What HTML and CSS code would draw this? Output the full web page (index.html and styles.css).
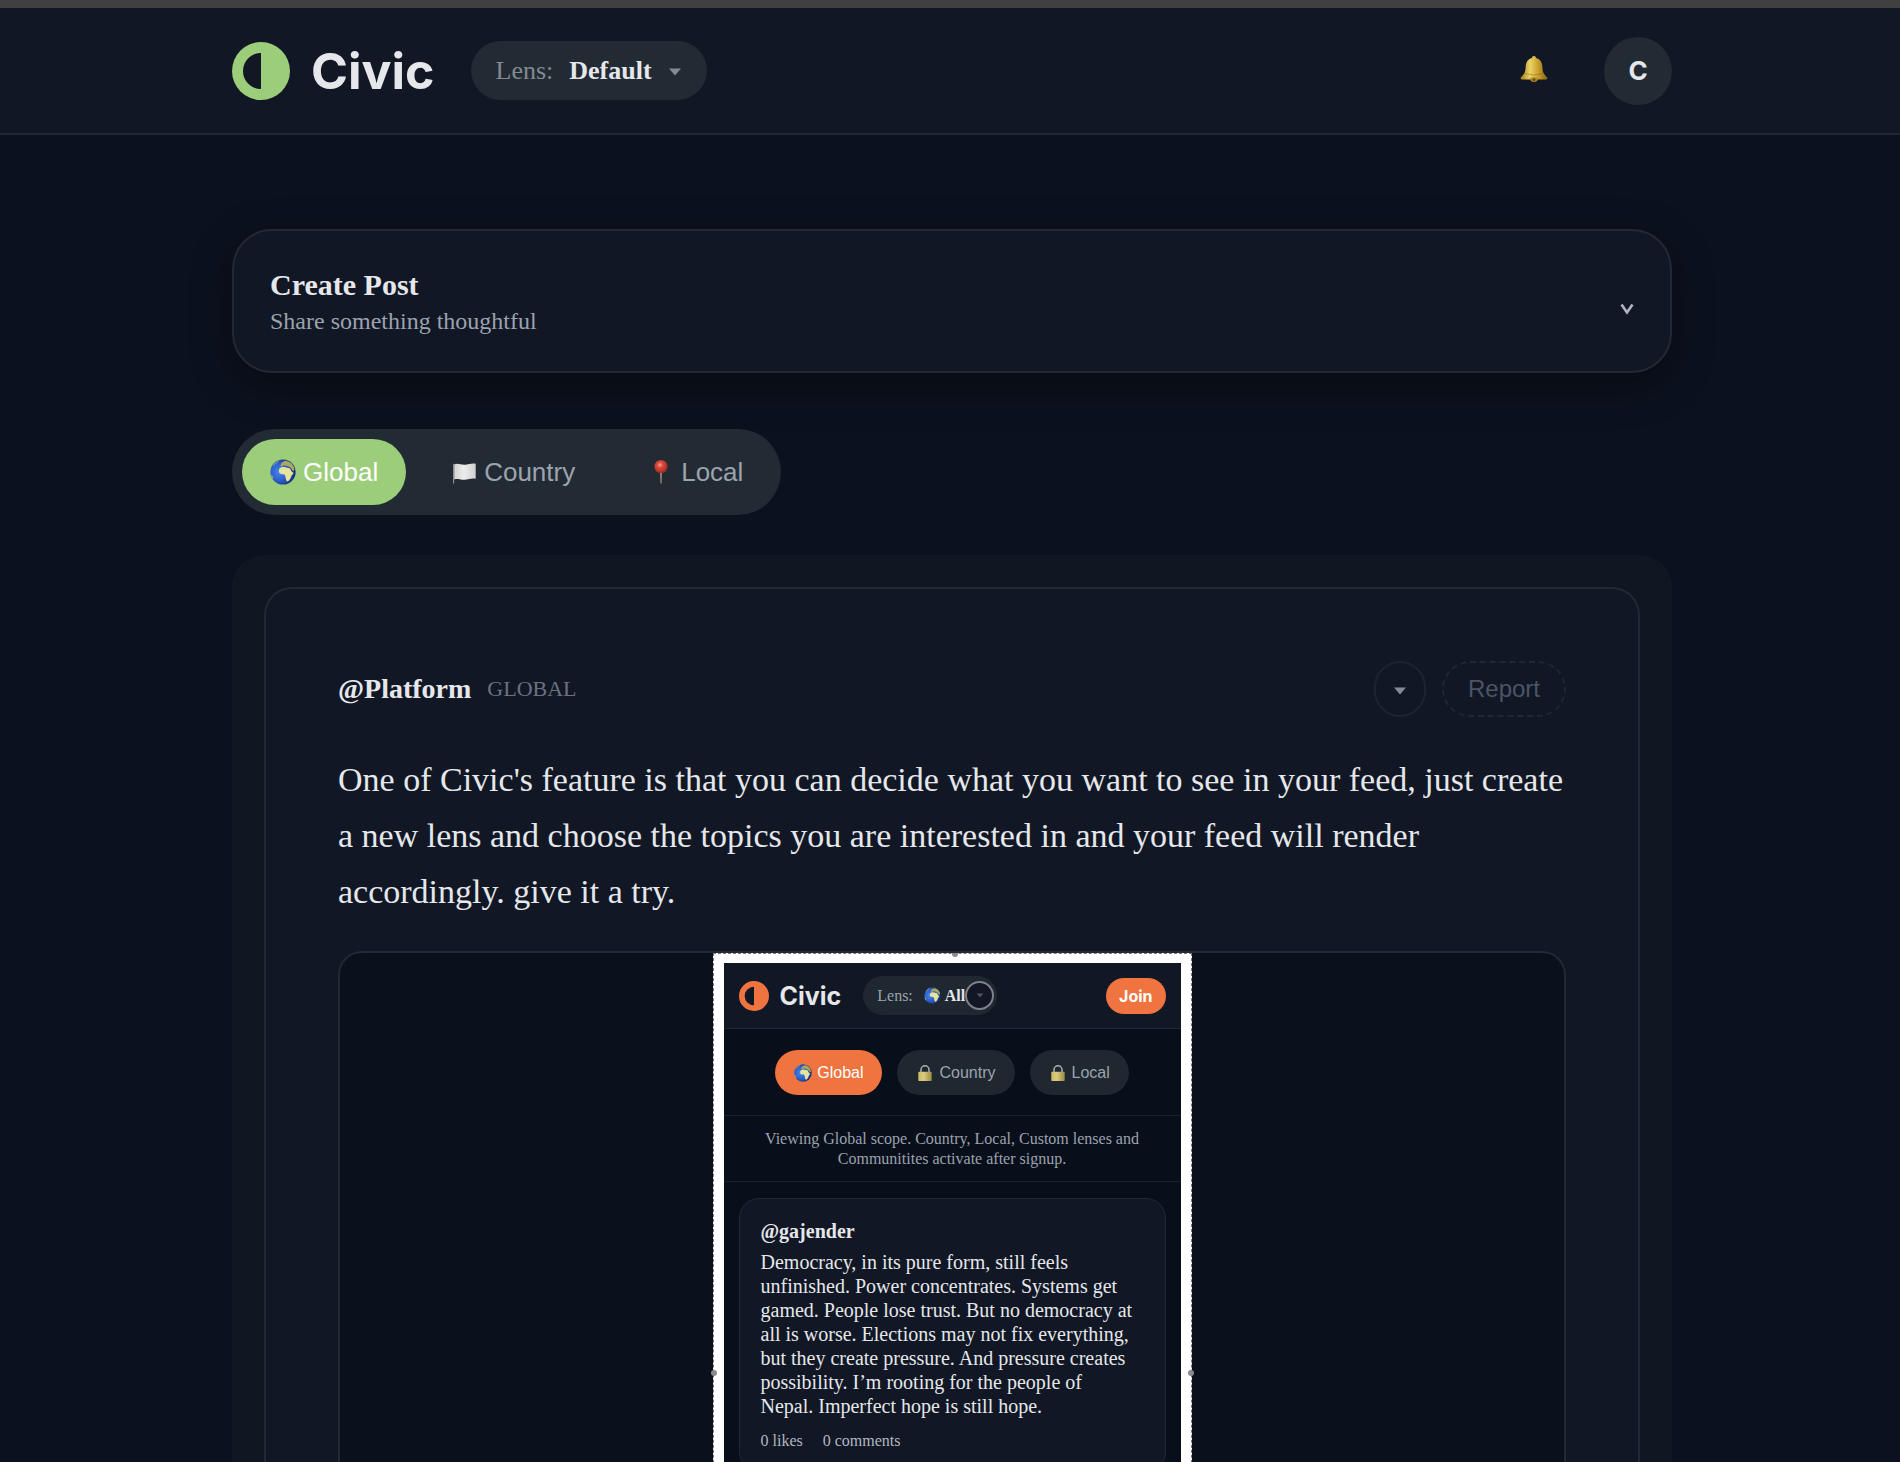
FILE: index.html
```html
<!DOCTYPE html>
<html lang="en">
<head>
<meta charset="utf-8">
<meta name="viewport" content="width=device-width, initial-scale=1">
<title>Civic</title>
<link rel="stylesheet" href="styles.css">
</head>
<body>
<svg class="sprite" aria-hidden="true">
  <defs>
    <radialGradient id="sea" cx="35%" cy="50%" r="65%"><stop offset="0" stop-color="#4a86ee"/><stop offset=".55" stop-color="#2a5cc8"/><stop offset="1" stop-color="#142a6c"/></radialGradient>
    <linearGradient id="gold" x1="0" x2="1" y1="0" y2="0"><stop offset="0" stop-color="#a8800f"/><stop offset=".35" stop-color="#ecd468"/><stop offset=".65" stop-color="#c9a12c"/><stop offset="1" stop-color="#8a6410"/></linearGradient>
    <radialGradient id="pinhead" cx="42%" cy="38%" r="60%"><stop offset="0" stop-color="#f7a79c"/><stop offset=".35" stop-color="#dd4a3e"/><stop offset="1" stop-color="#a82a22"/></radialGradient>
    <linearGradient id="brass" x1="0" x2="1" y1="0" y2="0"><stop offset="0" stop-color="#cdbb63"/><stop offset=".4" stop-color="#d9cc80"/><stop offset="1" stop-color="#9c8b40"/></linearGradient>
    <linearGradient id="cloth" x1="0" x2="1" y1="0" y2="0"><stop offset="0" stop-color="#d2d2d2"/><stop offset=".45" stop-color="#ececec"/><stop offset="1" stop-color="#cfcfcf"/></linearGradient>
  </defs>
  <symbol id="globe" viewBox="0 0 26 26">
    <circle cx="13" cy="13" r="12.6" fill="url(#sea)"/>
    <path d="M9.200 10.200c.6-1.300 1.900-2 3.400-2.200 1.800-.3 3.300.2 4.700.7 1.200.3 2 .2 2.700.9.8 1.400 1.300 2.700 2.300 3.700l1.200.2c-.3 1.500-1.500 2.500-2.300 3.800-.2 1.400-.8 2.400-1.500 3.300-.7 1.200-1.600 2.100-2.700 2-1.200-1.500-1.300-3.300-1.600-5-.2-1.400-.7-2.300-2.200-2.300-2 .2-3.800-.6-4.200-2.200-.2-1.100-.2-2 .2-2.900z" fill="#e6e39a"/>
    <path d="M10.500 7.200l.4-2.400 1.800-1.700 2.700-1.300c2.800.3 5.300 1.600 7.200 3.900 1.100 1.500 1.800 3.100 2.100 5l-1.700 1.200-2-2.600-1.300-1.400-2.200.1-1.600-1.300-2.400-.1-1.500 1z" fill="#a9a860"/>
    <path d="M14.800 7.200l2.200-.4 2.100.8-1.900.5z" fill="#2a5cc8"/>
    <path d="M3.200 5.800C4.800 3.600 7 2 9.600 1.200L8 3.400 5.200 5.200 3.600 8z" fill="#8fa58b" opacity=".7"/>
    <path d="M.8 15.500l1.900 1.300.8 2.600-.6 1.200a12 12 0 0 1-2.100-5.100z" fill="#93a67a"/>
  </symbol>
  <symbol id="bell" viewBox="0 0 28 28">
    <path d="M14 1c1.300 0 2 .8 2 1.900 3.900.9 6 4 6.300 8.200.2 3.900.6 6.500 2.200 8.500l2.700 3c.5.900-.3 1.700-1.800 2H2.600C1.100 24.300.3 23.500.8 22.600l2.700-3c1.600-2 2-4.600 2.200-8.500C6 6.900 8.100 3.800 12 2.900 12 1.800 12.700 1 14 1z" fill="url(#gold)"/>
    <path d="M4.500 18.500q9.500 3 19 0" fill="none" stroke="#8a6312" stroke-width=".8" opacity=".6"/>
    <path d="M10 23a4 4 0 0 0 8 0q-4-1.400-8 0z" fill="#b98a28"/>
    <circle cx="14" cy="24.800" r="1.500" fill="#6d4c10"/>
  </symbol>
  <symbol id="flag" viewBox="0 0 26 26">
    <path d="M2 5l1.200-.4v20H2z" fill="#8b8b8b"/>
    <path d="M3.200 5.400c3.500-1.600 7 .7 10.500.4 3.800-.2 7-1.900 11-1.100v15c-3.800-1-7.200.8-11 1.100-3.500.3-7-1.600-10.500-.2z" fill="url(#cloth)"/>
  </symbol>
  <symbol id="pin" viewBox="0 0 26 26">
    <path d="M12 12h2l-.4 12.500h-1.200z" fill="#9b8578"/>
    <circle cx="13" cy="7.500" r="6.600" fill="url(#pinhead)"/>
  </symbol>
  <symbol id="lock" viewBox="0 0 18 18">
    <path d="M5 8.500V5.800a4 4 0 0 1 8 0v2.700" fill="none" stroke="#a9b4b8" stroke-width="1.500"/>
    <rect x="2.300" y="7.800" width="13.400" height="9.200" rx=".8" fill="url(#brass)"/>
  </symbol>
  <symbol id="mark" viewBox="0 0 58 58">
    <circle cx="29" cy="29" r="29" fill="currentColor"/>
    <path d="M29 11v36a18 18 0 0 1 0-36z" fill="#111724"/>
  </symbol>
  <symbol id="caret" viewBox="0 0 14 8"><path d="M1 .5h12L7 7.500z" fill="currentColor"/></symbol>
</svg>

<div class="app">
  <header class="topbar">
    <div class="container topbar-row">
      <a class="brand" href="#"><svg class="brand-mark"><use href="#mark"/></svg><span>Civic</span></a>
      <button class="lens" type="button"><span class="lens-label">Lens:</span><strong>Default</strong><svg class="caret"><use href="#caret"/></svg></button>
      <button class="bell" type="button" aria-label="Notifications"><svg><use href="#bell"/></svg></button>
      <button class="avatar" type="button">C</button>
    </div>
  </header>

  <main class="container main">
    <section class="composer">
      <div>
        <h2>Create Post</h2>
        <p>Share something thoughtful</p>
      </div>
      <button class="expand" type="button" aria-label="Expand"><svg viewBox="0 0 14 12"><path d="M1.500 1.500L7 9.500l5.500-8" fill="none" stroke="currentColor" stroke-width="2.600"/></svg></button>
    </section>

    <nav class="scopes">
      <button class="scope active" type="button"><svg><use href="#globe"/></svg>Global</button>
      <button class="scope" type="button"><svg><use href="#flag"/></svg>Country</button>
      <button class="scope" type="button"><svg><use href="#pin"/></svg>Local</button>
    </nav>

    <section class="feed">
      <article class="post">
        <header class="post-head">
          <a class="author" href="#">@Platform</a>
          <span class="post-scope">GLOBAL</span>
          <button class="more" type="button" aria-label="More"><svg class="caret"><use href="#caret"/></svg></button>
          <button class="report" type="button">Report</button>
        </header>
        <p class="post-text">One of Civic's feature is that you can decide what you want to see in your feed, just create a new lens and choose the topics you are interested in and your feed will render accordingly. give it a try.</p>
        <div class="media">
          <div class="shot">
            <i class="handle handle-top"></i><i class="handle handle-left"></i><i class="handle handle-right"></i>
            <div class="mini">
              <div class="mini-bar">
                <a class="mini-brand" href="#"><svg><use href="#mark"/></svg><span>Civic</span></a>
                <button class="mini-lens" type="button"><span>Lens:</span><svg><use href="#globe"/></svg><strong>All</strong><span class="tap"><svg><use href="#caret"/></svg></span></button>
                <button class="join" type="button">Join</button>
              </div>
              <div class="mini-scopes">
                <button class="mini-scope active" type="button"><svg><use href="#globe"/></svg>Global</button>
                <button class="mini-scope" type="button"><svg><use href="#lock"/></svg>Country</button>
                <button class="mini-scope" type="button"><svg><use href="#lock"/></svg>Local</button>
              </div>
              <p class="notice">Viewing Global scope. Country, Local, Custom lenses and Communitites activate after signup.</p>
              <article class="mini-post">
                <h3>@gajender</h3>
                <p>Democracy, in its pure form, still feels unfinished. Power concentrates. Systems get gamed. People lose trust. But no democracy at all is worse. Elections may not fix everything, but they create pressure. And pressure creates possibility. I’m rooting for the people of Nepal. Imperfect hope is still hope.</p>
                <div class="stats"><span>0 likes</span><span>0 comments</span></div>
              </article>
            </div>
          </div>
        </div>
      </article>
    </section>
  </main>
</div>
</body>
</html>
```
FILE: styles.css
```css
* { box-sizing: border-box; }

body {
  margin: 0;
  background: #0b111e;
  color: #e5e7eb;
  font-family: "Liberation Serif", "Times New Roman", serif;
}

h2, h3, p { margin: 0; }
a { color: inherit; text-decoration: none; }
button { margin: 0; padding: 0; border: 0; background: none; color: inherit; font: inherit; cursor: pointer; }
svg { display: block; flex: none; }
.sprite { position: absolute; width: 0; height: 0; }

.app {
  height: 100vh;
  overflow-y: auto;
  scrollbar-width: none;
  border-top: 8px solid #404040;
}

.container { width: 100%; max-width: 1488px; margin: 0 auto; padding: 0 22px 0 26px; }

/* Top bar */
.topbar { background: #111724; border-bottom: 2px solid #222933; }
.topbar-row { display: flex; align-items: center; height: 125px; }
.brand { display: flex; align-items: center; gap: 21px; font: 700 50px/60px Inter, sans-serif; }
.brand-mark { width: 58px; height: 58px; color: #9ccd7a; }
.lens {
  display: flex; align-items: center; gap: 16px;
  height: 59px; margin-left: 36px; padding: 0 25px;
  border-radius: 30px; background: #222a33; font-size: 26px;
}
.lens-label { color: #838a93; }
.caret { width: 14px; height: 8px; margin-top: 3px; color: #838a93; }
.bell { margin-left: auto; margin-right: 56px; padding-bottom: 3px; }
.bell svg { width: 28px; height: 28px; }
.avatar {
  width: 68px; height: 68px; border-radius: 50%;
  background: #222a33; font: 700 26px/68px Inter, sans-serif;
}

/* Page column */
.main { padding-top: 94px; }
.composer {
  display: flex; align-items: center; justify-content: space-between;
  padding: 34px 36px; border: 2px solid #222933; border-radius: 40px;
  background: #111724; box-shadow: 0 12px 40px rgba(0, 0, 0, .35);
}
.composer h2 { font-size: 30px; line-height: 40px; }
.composer p { font-size: 24px; line-height: 32px; color: #9ca3af; }
.expand { margin-top: 16px; color: #b0b5be; }
.expand svg { width: 14px; height: 12px; }

.scopes {
  display: flex; gap: 17px; width: max-content;
  margin-top: 56px; padding: 10px;
  border-radius: 43px; background: #222a33;
}
.scope {
  display: flex; align-items: center; gap: 7px;
  height: 66px; padding: 0 28px; border-radius: 33px;
  color: #9ca3af; font: 26px/30px "Liberation Sans", Arial, sans-serif;
}
.scope svg { width: 26px; height: 26px; }
.scope.active { background: #9ccd7a; color: #fff; }

/* Feed */
.feed { margin-top: 40px; padding: 32px; border-radius: 32px; background: #101622; }
.post { padding: 72px; border: 2px solid #222933; border-radius: 28px; background: #111724; }
.post-head { display: flex; align-items: center; height: 56px; }
.author { font-size: 28px; font-weight: 700; }
.post-scope { margin-left: 16px; font-size: 22px; color: #6b7280; }
.more {
  display: grid; place-items: center;
  width: 52px; height: 56px; margin-left: auto;
  border: 2px solid #1d2430; border-radius: 26px;
}
.report {
  width: 124px; height: 56px; margin-left: 16px;
  border: 2px dashed #1f2733; border-radius: 28px;
  color: #4b5566; font: 24px/28px "Liberation Sans", Arial, sans-serif;
}
.post-text { margin: 35px -16px 0 0; font-size: 34px; line-height: 56px; }

.media {
  display: flex; justify-content: center;
  margin-top: 31px; border: 2px solid #222933; border-radius: 24px;
  background: #0a101c; overflow: hidden;
}
.shot {
  position: relative; width: 479px; padding: 9px 10px;
  border: 1px dashed #777; background: #fff;
}
.handle { position: absolute; width: 6px; height: 6px; border-radius: 50%; background: #8a8a8a; }
.handle-top { top: -3px; left: 50%; }
.handle-left { left: -3px; top: 416px; }
.handle-right { right: -3px; top: 416px; }

/* Embedded app preview */
.mini { background: #080e1a; font-size: 16px; }
.mini-bar {
  display: flex; align-items: center; height: 66px; padding: 0 15px;
  background: #111724; border-bottom: 1px solid #222933;
}
.mini-brand { display: flex; align-items: center; gap: 11px; font: 700 25px/30px Inter, sans-serif; }
.mini-brand svg { width: 30px; height: 30px; color: #ef7440; }
.mini-lens {
  display: flex; align-items: center; height: 39px;
  margin-left: 22px; padding: 0 3px 0 14px; border-radius: 20px;
  background: #1f2730; color: #9ca3af;
}
.mini-lens svg { width: 17px; height: 17px; margin: 0 4px 0 11px; }
.mini-lens strong { color: #e5e7eb; }
.mini-lens .tap {
  display: grid; place-items: center; width: 29px; height: 29px;
  border: 2px solid #7d828a; border-radius: 50%; background: #111724; color: #4b5563;
}
.mini-lens .tap svg { width: 8px; height: 5px; margin: 0; }
.join {
  height: 36px; margin-left: auto; padding: 0 13px; border-radius: 18px;
  background: #ef7440; color: #fff; font: 700 16px/20px Inter, sans-serif;
}
.mini-scopes {
  display: flex; justify-content: center; gap: 15px;
  padding: 21px 0 20px; border-bottom: 1px solid #1b222e;
}
.mini-scope {
  display: flex; align-items: center; gap: 5px;
  height: 45px; padding: 0 19px; border-radius: 23px;
  background: #1f2730; color: #9ca3af; font: 16px/20px "Liberation Sans", Arial, sans-serif;
}
.mini-scope svg { width: 18px; height: 18px; }
.mini-scope.active { background: #ef7440; color: #fff; }
.notice {
  padding: 13px 30px 12px; border-bottom: 1px solid #1b222e;
  color: #9ca3af; line-height: 20px; text-align: center;
}
.mini-post {
  margin: 16px 15px; padding: 20px 21px; border: 1px solid #222933;
  border-radius: 20px; background: #111724;
}
.mini-post h3 { font-size: 20px; line-height: 24px; }
.mini-post p { margin-top: 7px; padding-right: 8px; font-size: 20px; line-height: 24px; }
.stats { display: flex; gap: 20px; margin-top: 13px; color: #b3b8c0; line-height: 20px; }
```
